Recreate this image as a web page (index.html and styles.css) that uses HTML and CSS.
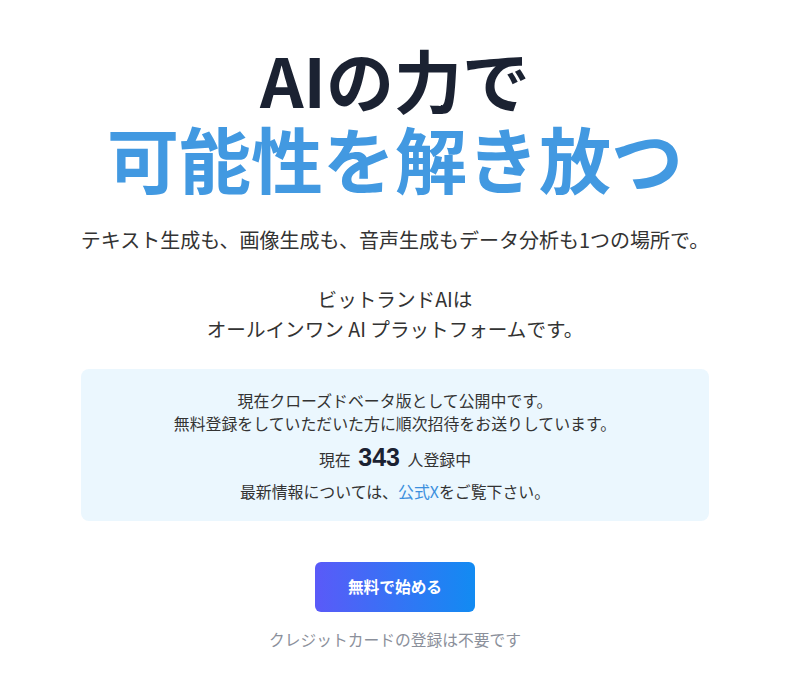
FILE: index.html
```html
<!DOCTYPE html>
<html lang="ja">
<head>
<meta charset="UTF-8" />
<title>ビットランドAI</title>
<link rel="stylesheet" href="styles.css">
</head>
<body>

<div class="page">
  <h1 class="title">
    <span class="title-top">AIの力で</span>
    <span class="title-main">可能性を解き放つ</span>
  </h1>

  <p class="lead">テキスト生成も、画像生成も、音声生成もデータ分析も1つの場所で。</p>

  <p class="intro">ビットランドAIは<br>オールインワン AI プラットフォームです。</p>

  <div class="notice">
    <p class="notice-text">現在クローズドベータ版として公開中です。<br>無料登録をしていただいた方に順次招待をお送りしています。</p>
    <p class="count">現在 <strong>343</strong> 人登録中</p>
    <p class="notice-text">最新情報については、<a href="#">公式X</a>をご覧下さい。</p>
  </div>

  <div class="cta">
    <a class="btn" href="#">無料で始める</a>
    <p class="note">クレジットカードの登録は不要です</p>
  </div>
</div>

</body>
</html>
```

FILE: styles.css
```css
body { margin: 0; background: #fff; font-family: "Noto Sans CJK JP", "Noto Sans", sans-serif; color: #333; }
.page { width: 628px; padding: 43px 81px 30px; box-sizing: content-box; text-align: center; }
.title { margin: 0; font-weight: 700; }
.title span { display: block; white-space: nowrap; }
.title-top { font-size: 68px; line-height: 72px; color: #1b2232; }
.title-main { font-size: 72px; line-height: 84px; color: #4299e1; }
.lead { margin: 26px -20px 0; font-size: 20px; line-height: 30px; }
.intro { margin: 29px 0 0; font-size: 19.6px; line-height: 30px; }
.notice { margin-top: 25px; background: #ebf7fe; border-radius: 8px; padding: 20px 20px 18px; }
.notice p { margin: 0; }
.notice-text { font-size: 15.9px; line-height: 23px; }
.count { margin: 8px 0 6px !important; font-size: 15.9px; line-height: 28px; }
.count strong { font-size: 25px; font-weight: 700; color: #1b2232; margin: 0 4px; font-family: "Liberation Sans", sans-serif; }
.notice a { color: #3b8fdd; text-decoration: none; }
.cta { margin-top: 41px; }
.btn { display: inline-block; width: 160px; height: 50px; line-height: 50px; border-radius: 6px; background: linear-gradient(90deg, #5a5af8, #128bf2); color: #fff; font-size: 15.7px; font-weight: 700; text-decoration: none; vertical-align: top; }
.note { margin: 17px 0 0; font-size: 15.75px; line-height: 22px; color: #8b909b; }
```
